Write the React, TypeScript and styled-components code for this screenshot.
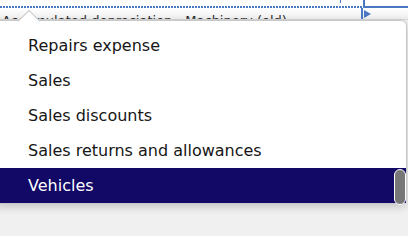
import React from "react";
import styled, {createGlobalStyle} from "styled-components";

const GlobalStyle = createGlobalStyle`
    html, body {
        margin: 0;
        padding: 0;
        background: #f0f0f0;
        overflow: hidden;
    }
    #root {
        width: 408px;
        height: 236px;
        overflow: hidden;
    }
`

const accounts = [
    "Repairs expense",
    "Sales",
    "Sales discounts",
    "Sales returns and allowances",
    "Vehicles",
]

export default function App() {
    const selected = "Vehicles"

    return (
        <>
            <GlobalStyle/>
            <Screen>
                <Sheet>
                    <FocusLine>
                        <Dotted/>
                        <SolidEdge/>
                    </FocusLine>
                    <CellRow>
                        <CellText>Accumulated depreciation - Machinery (old)</CellText>
                        <ExpandArrow/>
                    </CellRow>
                    <Tick/>
                    <HandleMark/>
                </Sheet>
                <Menu>
                    <Notch/>
                    <List>
                        {accounts.map(a => (
                            <Option key={a} $active={a === selected}>{a}</Option>
                        ))}
                    </List>
                    <Thumb/>
                </Menu>
            </Screen>
        </>
    )
}

const Screen = styled.div`
    width: 408px;
    height: 236px;
    display: flex;
    flex-direction: column;
    font-family: "DejaVu Sans", Verdana, sans-serif;
`

const Sheet = styled.div`
    position: relative;
    height: 20px;
    background: #fff;
    display: flex;
    flex-direction: column;
    padding-top: 6px;
    box-sizing: border-box;
`

const FocusLine = styled.div`
    display: flex;
    height: 2px;
`

const Dotted = styled.div`
    width: 363px;
    height: 2px;
    background: repeating-linear-gradient(90deg, #4a78c2 0 2px, transparent 2px 3px);
`

const SolidEdge = styled.div`
    flex: 1;
    height: 2px;
    background: #4a78c2;
    border-left: 2px solid #4a78c2;
`

const CellRow = styled.div`
    flex: 1;
    display: flex;
    align-items: flex-start;
    overflow: hidden;
    background: linear-gradient(#ffffff, #eeeeee);
    border-bottom: 1px solid #d6d6d6;
`

const CellText = styled.span`
    width: 363px;
    padding-left: 2px;
    padding-top: 5px;
    font-size: 13px;
    color: #2b2b2b;
    white-space: nowrap;
    border-right: 2px solid #4a78c2;
    box-sizing: border-box;
`

const ExpandArrow = styled.span`
    margin-top: 2px;
    margin-left: 1px;
    width: 0;
    height: 0;
    border-top: 4px solid transparent;
    border-bottom: 4px solid transparent;
    border-left: 7px solid #4a78c2;
`

const Tick = styled.span`
    position: absolute;
    left: 363px;
    top: 0;
    width: 2px;
    height: 6px;
    background: #4a78c2;
`

const HandleMark = styled.span`
    position: absolute;
    left: 340px;
    top: 0;
    width: 1px;
    height: 3px;
    background: #4a78c2;
`

const Menu = styled.div`
    position: relative;
    margin-left: -4px;
    width: 411px;
    height: 184px;
    background: #fff;
    border: 1px solid #c8c8c8;
    border-radius: 0 6px 6px 0;
    box-shadow: 0 3px 8px rgba(0, 0, 0, 0.18);
    box-sizing: border-box;
    padding-top: 7px;
`

const Notch = styled.span`
    position: absolute;
    left: 24px;
    top: -8px;
    width: 15px;
    height: 15px;
    background: #fff;
    border-left: 1px solid #c8c8c8;
    border-top: 1px solid #c8c8c8;
    transform: rotate(45deg);
`

const List = styled.ul`
    position: relative;
    list-style: none;
    margin: 0;
    padding: 0;
`

const Option = styled.li<{ $active?: boolean }>`
    height: 35px;
    line-height: 35px;
    padding-left: 31px;
    font-size: 16px;
    color: ${p => p.$active ? "#ffffff" : "#161616"};
    background: ${p => p.$active ? "#120866" : "transparent"};
    white-space: nowrap;
`

const Thumb = styled.span`
    position: absolute;
    right: 0;
    top: 148px;
    width: 10px;
    height: 34px;
    background: #777;
    border: 1px solid #fff;
    border-radius: 6px;
`
